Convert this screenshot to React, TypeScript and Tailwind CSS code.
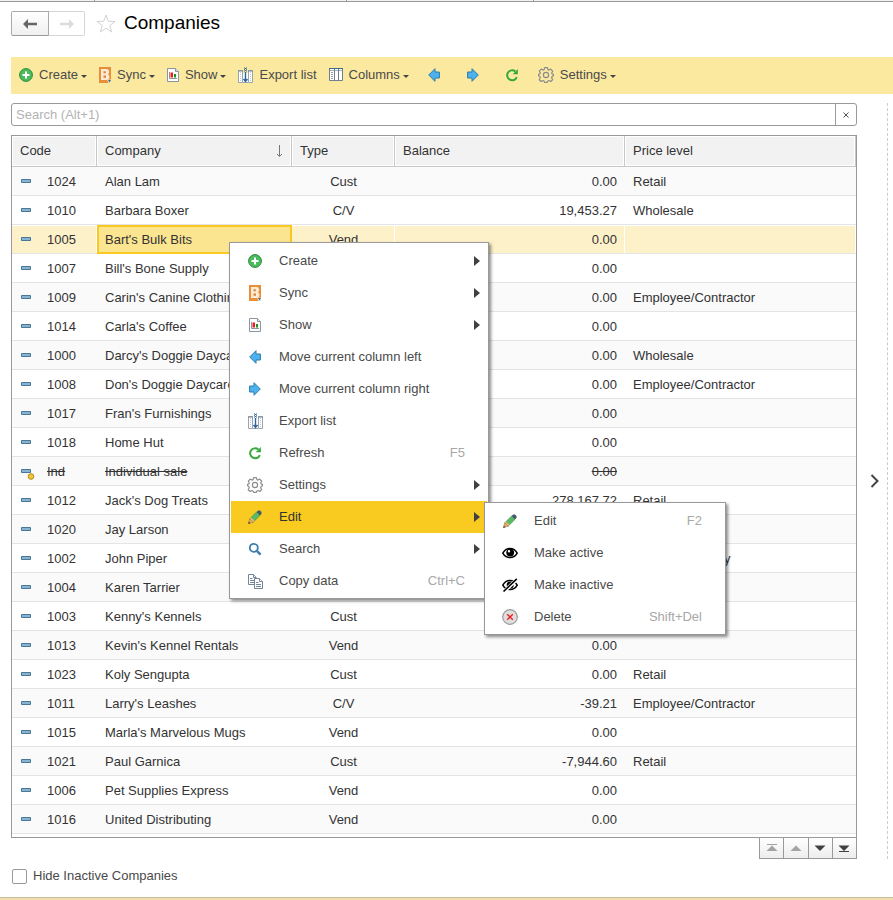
import type { ReactNode } from "react";

type Company = {
  code: string;
  name: string;
  type: string;
  balance: string;
  price: string;
  inactive?: boolean;
  selected?: boolean;
};

const companies: Company[] = [
  { code: "1024", name: "Alan Lam", type: "Cust", balance: "0.00", price: "Retail" },
  { code: "1010", name: "Barbara Boxer", type: "C/V", balance: "19,453.27", price: "Wholesale" },
  { code: "1005", name: "Bart's Bulk Bits", type: "Vend", balance: "0.00", price: "", selected: true },
  { code: "1007", name: "Bill's Bone Supply", type: "Vend", balance: "0.00", price: "" },
  { code: "1009", name: "Carin's Canine Clothing", type: "C/V", balance: "0.00", price: "Employee/Contractor" },
  { code: "1014", name: "Carla's Coffee", type: "Vend", balance: "0.00", price: "" },
  { code: "1000", name: "Darcy's Doggie Daycare", type: "Cust", balance: "0.00", price: "Wholesale" },
  { code: "1008", name: "Don's Doggie Daycare", type: "C/V", balance: "0.00", price: "Employee/Contractor" },
  { code: "1017", name: "Fran's Furnishings", type: "Vend", balance: "0.00", price: "" },
  { code: "1018", name: "Home Hut", type: "Vend", balance: "0.00", price: "" },
  { code: "Ind", name: "Individual sale", type: "Cust", balance: "0.00", price: "", inactive: true },
  { code: "1012", name: "Jack's Dog Treats", type: "Cust", balance: "278,167.72", price: "Retail" },
  { code: "1020", name: "Jay Larson", type: "Cust", balance: "0.00", price: "Retail" },
  { code: "1002", name: "John Piper", type: "Cust", balance: "0.00", price: "Friends & Family" },
  { code: "1004", name: "Karen Tarrier", type: "Cust", balance: "0.00", price: "Retail" },
  { code: "1003", name: "Kenny's Kennels", type: "Cust", balance: "0.00", price: "Retail" },
  { code: "1013", name: "Kevin's Kennel Rentals", type: "Vend", balance: "0.00", price: "" },
  { code: "1023", name: "Koly Sengupta", type: "Cust", balance: "0.00", price: "Retail" },
  { code: "1011", name: "Larry's Leashes", type: "C/V", balance: "-39.21", price: "Employee/Contractor" },
  { code: "1015", name: "Marla's Marvelous Mugs", type: "Vend", balance: "0.00", price: "" },
  { code: "1021", name: "Paul Garnica", type: "Cust", balance: "-7,944.60", price: "Retail" },
  { code: "1006", name: "Pet Supplies Express", type: "Vend", balance: "0.00", price: "" },
  { code: "1016", name: "United Distributing", type: "Vend", balance: "0.00", price: "" },
];

function CreateIcon() {
  return (
    <svg width="14" height="14" viewBox="0 0 14 14" aria-hidden="true">
      <circle cx="7" cy="7" r="6.4" fill="#4cbb5c" stroke="#2b8a3a" />
      <path d="M7 3.5v7M3.5 7h7" stroke="#fff" strokeWidth="2" />
    </svg>
  );
}

function SyncIcon() {
  return (
    <svg width="12" height="16" viewBox="0 0 12 16" aria-hidden="true">
      <path d="M0 0h12v16H0z" fill="#e98f3a" />
      <path
        d="M2 2h5.500c3 0 3.300 4 1.300 5.300 2.600 1.200 2.200 5.700-1.300 5.700H2z"
        fill="#fdebd6"
      />
      <path d="M4.500 4.200h2.300v2.100H4.500zM4.500 8.500h2.500v2.300H4.500z" fill="#dd8238" />
      <path d="M8 12.500h4V16H9.500z" fill="#f7e3c6" />
      <path d="M9 13h3l-1.500 2.400z" fill="#3d6d90" />
    </svg>
  );
}

function ShowIcon() {
  return (
    <svg width="12" height="14" viewBox="0 0 12 14" aria-hidden="true">
      <path d="M.5.5h8l3 3v10H.5z" fill="#fff" stroke="#8a95a0" />
      <path d="M8.500.5v3h3" fill="#dfe4e8" stroke="#8a95a0" />
      <path d="M2.500 4v6.500H10" stroke="#8a95a0" fill="none" />
      <path d="M3.500 4.500H6v5H3.500z" fill="#ef1c1c" />
      <path d="M7 6h2v3.500H7z" fill="#12961e" />
    </svg>
  );
}

function ExportIcon() {
  return (
    <svg width="15" height="16" viewBox="0 0 15 16" aria-hidden="true">
      <path d="M.5 3.500h4v12h-4zM10.500 3.500h4v12h-4z" fill="#fff" stroke="#98a4ae" />
      <path d="M5 6h5v9.500H5z" fill="#fff" />
      <path d="M0 4h5M10 4h5" stroke="#71869a" />
      <path d="M2.500 5v10M12.500 5v10" stroke="#c3cbd2" strokeDasharray="1 1" />
      <path d="M5 15.500h5" stroke="#98a4ae" />
      <path d="M7.500 5v9M5.500 12l2 2.500 2-2.500" stroke="#2c659c" strokeWidth="1.400" fill="none" />
      <path d="M6 .5l3 2M9 .5l-3 2M6 2.500l3 2M9 2.500l-3 2" stroke="#2c659c" strokeWidth=".8" />
    </svg>
  );
}

function ColumnsIcon() {
  return (
    <svg width="14" height="13" viewBox="0 0 14 13" aria-hidden="true">
      <path d="M.5.5h13v12H.5z" fill="#fff" stroke="#6e818f" />
      <path d="M0 .5h14" stroke="#3f6a80" />
      <path d="M1 2.500h12" stroke="#a9b6be" />
      <path d="M5.500 1v12M9.500 1v12" stroke="#6e818f" />
      <path d="M2 4.500h2M2 6.500h2M2 8.500h2M2 10.500h2" stroke="#8fa0ac" />
    </svg>
  );
}

function LeftIcon() {
  return (
    <svg width="12" height="14" viewBox="0 0 12 14" aria-hidden="true">
      <path d="M.7 7L7 .7V4h4.400v6H7v3.300z" fill="#4bb2ef" stroke="#2d7ba8" strokeLinejoin="round" />
    </svg>
  );
}

function RightIcon() {
  return (
    <svg width="12" height="14" viewBox="0 0 12 14" aria-hidden="true">
      <path d="M11.300 7L5 .7V4H.6v6H5v3.300z" fill="#4bb2ef" stroke="#2d7ba8" strokeLinejoin="round" />
    </svg>
  );
}

function RefreshIcon() {
  return (
    <svg width="14" height="14" viewBox="0 0 14 14" aria-hidden="true">
      <path d="M11.800 9.200A5 5 0 1 1 10.300 3.400" fill="none" stroke="#35a83a" strokeWidth="2" />
      <path d="M12.900 1v5.200H7.700z" fill="#35a83a" />
    </svg>
  );
}

function GearIcon() {
  return (
    <svg
      width="16"
      height="16"
      viewBox="0 0 16 16"
      fill="none"
      stroke="#8c8c8c"
      strokeWidth="1.200"
      strokeLinejoin="round"
      aria-hidden="true"
    >
      <path d="M6.600.7h2.800l.5 1.900 1.100.5 1.700-1 2 2-1 1.700.4 1.100 1.300.4v1.400l-1.300.9-.5 1.200 1.100 1.900-1.800 1.800-1.800-1-1.200.5-.5 1.300H6.600l-.6-1.300-1.100-.5-1.800 1-1.900-1.800 1.100-1.900-.5-1.200-1.200-.9V7.300l1.200-.4.5-1.200-1-1.600 1.900-2 1.700 1 1.200-.5z" />
      <circle cx="8" cy="8" r="2.600" />
    </svg>
  );
}

function PencilIcon() {
  return (
    <svg width="14" height="14" viewBox="0 0 14 14" aria-hidden="true">
      <path d="M.5 13.500l1.300-4.700 3.400 3.400z" fill="#eeb067" stroke="#8a6a3c" strokeWidth=".6" />
      <path d="M1.800 8.800l6.800-6.800 3.400 3.400-6.800 6.800z" fill="#58bb66" stroke="#3d7b49" strokeWidth=".5" />
      <path d="M1.800 8.800l1.400-1.400 3.400 3.400-1.400 1.400z" fill="#eeb067" />
      <path d="M8.600 2L10.200.5h1.700l1.600 1.600v1.700L12 5.400z" fill="#44576b" />
      <path d="M.3 13.700l.5-2 1.500 1.500z" fill="#333" />
    </svg>
  );
}

function SearchIcon() {
  return (
    <svg width="14" height="14" viewBox="0 0 14 14" fill="none" stroke="#3c7dae" aria-hidden="true">
      <circle cx="5.800" cy="5.800" r="4" strokeWidth="1.800" />
      <path d="M8.800 8.800l3.800 3.800" strokeWidth="2.400" />
    </svg>
  );
}

function CopyIcon() {
  return (
    <svg width="15" height="15" viewBox="0 0 15 15" fill="#fff" stroke="#75869a" aria-hidden="true">
      <path d="M.5.5h5l2.500 2.500v7.500H.5z" />
      <path d="M5.500.5v3H8M2 4.500h2.500M2 6.500h4M2 8.500h4" />
      <path d="M6.500 4.500h5l3 3v7h-8z" />
      <path d="M11.500 4.500v3h3M8 8.500h2.500M8 10.500h5M8 12.500h5" />
    </svg>
  );
}

function EyeIcon() {
  return (
    <svg width="16" height="12" viewBox="0 0 16 12" aria-hidden="true">
      <path d="M.8 6.200C4-.2 12-.2 15.200 6.200 12 12 4 12 .8 6.200z" fill="#fff" stroke="#000" strokeWidth="1.500" />
      <circle cx="8.200" cy="5.600" r="3.900" fill="#000" />
      <circle cx="7" cy="4.300" r="1.200" fill="#fff" />
    </svg>
  );
}

function EyeOffIcon() {
  return (
    <svg width="16" height="14" viewBox="0 0 16 14" aria-hidden="true">
      <path d="M.8 7.200C4 .8 12 .8 15.200 7.200 12 13 4 13 .8 7.200z" fill="#fff" stroke="#000" strokeWidth="1.500" />
      <circle cx="8.200" cy="7" r="3.500" fill="#000" />
      <path d="M6 8.500l4.500-4" stroke="#fff" strokeWidth="1.200" />
      <path d="M1.500 14L15.500.8" stroke="#fff" strokeWidth="3.600" />
      <path d="M1.500 13.500L14.800.8" stroke="#000" strokeWidth="1.600" />
    </svg>
  );
}

function DeleteIcon() {
  return (
    <svg width="16" height="16" viewBox="0 0 16 16" aria-hidden="true">
      <circle cx="8" cy="8" r="7.300" fill="#dedede" stroke="#9b9b9b" strokeWidth="1.200" />
      <path d="M5.200 5.200l5.600 5.600M10.800 5.200l-5.600 5.600" stroke="#ed2024" strokeWidth="1.400" />
    </svg>
  );
}

function RowIcon({ inactive }: { inactive?: boolean }) {
  return (
    <svg width="16" height="16" viewBox="0 0 16 16" className="shrink-0" aria-hidden="true">
      <path d="M1.500 5.500h9v3h-9z" fill="#87b4d4" stroke="#4a7793" />
      {inactive && <circle cx="11" cy="12.500" r="2.800" fill="#f3c433" stroke="#b58a1c" />}
    </svg>
  );
}

function Caret() {
  return (
    <svg width="6" height="3" viewBox="0 0 6 3" className="mt-1 ml-[3px]" aria-hidden="true">
      <path d="M0 0h6L3 3z" fill="#444" />
    </svg>
  );
}

function ToolButton({ icon, label, menu }: { icon: ReactNode; label: string; menu?: boolean }) {
  return (
    <button type="button" className="flex h-8 items-center gap-1.5 px-1.5">
      {icon}
      <span className="flex items-center whitespace-nowrap">
        {label}
        {menu && <Caret />}
      </span>
    </button>
  );
}

function IconButton({ icon, label }: { icon: ReactNode; label: string }) {
  return (
    <button type="button" aria-label={label} className="flex h-8 w-[39px] items-center justify-center">
      {icon}
    </button>
  );
}

function MenuItem({
  icon,
  label,
  shortcut,
  submenu,
  active,
}: {
  icon: ReactNode;
  label: string;
  shortcut?: string;
  submenu?: boolean;
  active?: boolean;
}) {
  return (
    <button
      type="button"
      role="menuitem"
      className={`flex h-8 w-full items-center pr-[7px] pl-4 text-left ${active ? "bg-[#f9cb20] text-[#333]" : ""}`}
    >
      <span className="flex w-4 shrink-0 justify-center">{icon}</span>
      <span className="ml-4 flex-1 whitespace-nowrap">{label}</span>
      {shortcut && <span className="mr-[15px] text-[#a8a8a8]">{shortcut}</span>}
      {submenu && (
        <svg width="6" height="10" viewBox="0 0 6 10" aria-hidden="true">
          <path d="M0 0l6 5-6 5z" fill="#404040" />
        </svg>
      )}
    </button>
  );
}

const menuFrame =
  "absolute border border-[#999] bg-white px-px pt-0.5 pb-px shadow-[2px_2px_3px_rgba(0,0,0,0.45)]";

function ContextMenu() {
  return (
    <div role="menu" className={`${menuFrame} top-[107px] left-[218px] w-[260px]`}>
      <MenuItem icon={<CreateIcon />} label="Create" submenu />
      <MenuItem icon={<SyncIcon />} label="Sync" submenu />
      <MenuItem icon={<ShowIcon />} label="Show" submenu />
      <MenuItem icon={<LeftIcon />} label="Move current column left" />
      <MenuItem icon={<RightIcon />} label="Move current column right" />
      <MenuItem icon={<ExportIcon />} label="Export list" />
      <MenuItem icon={<RefreshIcon />} label="Refresh" shortcut="F5" />
      <MenuItem icon={<GearIcon />} label="Settings" submenu />
      <MenuItem icon={<PencilIcon />} label="Edit" submenu active />
      <MenuItem icon={<SearchIcon />} label="Search" submenu />
      <MenuItem icon={<CopyIcon />} label="Copy data" shortcut="Ctrl+C" />
      <div role="menu" className={`${menuFrame} top-[259px] left-[254px] w-[242px]`}>
        <MenuItem icon={<PencilIcon />} label="Edit" shortcut="F2" />
        <MenuItem icon={<EyeIcon />} label="Make active" />
        <MenuItem icon={<EyeOffIcon />} label="Make inactive" />
        <MenuItem icon={<DeleteIcon />} label="Delete" shortcut="Shift+Del" />
      </div>
    </div>
  );
}

const headCell =
  "h-[31px] border-r border-b border-[#c8c8c8] bg-[#f2f2f2] px-2 text-left font-normal shadow-[inset_0_0_0_1px_#fff]";

function CompanyRow({ company, striped }: { company: Company; striped: boolean }) {
  const { selected, inactive } = company;
  const cell = `h-[29px] border-b border-b-[#e4e4e4] px-2 pt-0.5 whitespace-nowrap overflow-hidden ${
    selected ? "shadow-[inset_-1px_1px_0_#fff]" : ""
  } ${inactive ? "line-through" : ""}`;
  return (
    <tr className={selected ? "bg-[#fdf1c9]" : striped ? "bg-[#fafafa]" : "bg-white"}>
      <td className={cell}>
        <div className="flex items-center gap-[11px]">
          <RowIcon inactive={inactive} />
          <span className={inactive ? "line-through" : ""}>{company.code}</span>
        </div>
      </td>
      {selected ? (
        <td className="h-[29px] border-2 border-[#f9c922] bg-[#fbe591] px-1.5 whitespace-nowrap">{company.name}</td>
      ) : (
        <td className={cell}>{company.name}</td>
      )}
      <td className={`${cell} text-center`}>{company.type}</td>
      <td className={`${cell} text-right`}>{company.balance}</td>
      <td className={cell}>{company.price}</td>
    </tr>
  );
}

function CompanyTable() {
  return (
    <div className="border border-[#999] bg-white pb-[3px]">
      <table className="w-full table-fixed border-separate border-spacing-0 text-[#333]">
        <colgroup>
          <col className="w-[85px]" />
          <col className="w-[195px]" />
          <col className="w-[103px]" />
          <col className="w-[230px]" />
          <col />
        </colgroup>
        <thead>
          <tr>
            <th className={headCell}>Code</th>
            <th className={headCell}>
              <div className="flex items-center justify-between">
                Company
                <svg
                  width="7"
                  height="12"
                  viewBox="0 0 7 12"
                  fill="none"
                  stroke="#777"
                  role="img"
                  aria-label="Sorted"
                >
                  <path d="M3.500 0v11M1 9l2.500 2.500L6 9" />
                </svg>
              </div>
            </th>
            <th className={headCell}>Type</th>
            <th className={headCell}>Balance</th>
            <th className={headCell}>Price level</th>
          </tr>
        </thead>
        <tbody>
          {companies.map((company, i) => (
            <CompanyRow key={company.code} company={company} striped={i % 2 === 0} />
          ))}
        </tbody>
      </table>
    </div>
  );
}

function PagerButton({ label, disabled, children }: { label: string; disabled?: boolean; children: ReactNode }) {
  return (
    <button
      type="button"
      aria-label={label}
      disabled={disabled}
      className={`flex h-[21px] flex-1 items-center justify-center border-r border-b border-[#999] bg-linear-to-b from-white to-[#ededed] ${
        disabled ? "text-[#a3a3a3]" : "text-[#404040]"
      }`}
    >
      <svg width="12" height="8" viewBox="0 0 12 8" fill="currentColor" aria-hidden="true">
        {children}
      </svg>
    </button>
  );
}

export default function App() {
  return (
    <div className="flex min-h-screen flex-col bg-white font-['Liberation_Sans',Arial,sans-serif] text-[13px] leading-4 text-[#4a4a4a]">
      <div className="flex h-0.5 border-b border-[#999] bg-[#f2f2f2]">
        <span className="w-[95px] border-r border-[#999]" />
        <span className="w-[252px] border-r border-[#999]" />
        <span className="w-[187px] border-r border-[#999]" />
      </div>

      <header className="flex h-[55px] items-start pt-[9px] pl-[11px]">
        <div className="flex">
          <button
            type="button"
            aria-label="Back"
            className="flex h-[25px] w-[38px] items-center justify-center rounded-l-xs border border-[#aaa] border-b-[#999] bg-linear-to-b from-white to-[#f0f0f0]"
          >
            <svg width="14" height="10" viewBox="0 0 14 10" aria-hidden="true">
              <path d="M0 5l5-5v3.700h9v2.600H5V10z" fill="#666" />
            </svg>
          </button>
          <button
            type="button"
            aria-label="Forward"
            disabled
            className="flex h-[25px] w-9 items-center justify-center rounded-r-xs border border-l-0 border-[#d6d6d6] bg-white"
          >
            <svg width="14" height="10" viewBox="0 0 14 10" aria-hidden="true">
              <path d="M14 5L9 0v3.700H0v2.600h9V10z" fill="#dcdcdc" />
            </svg>
          </button>
        </div>
        <button type="button" aria-label="Add to favorites" className="mt-[3px] ml-[11px]">
          <svg width="20" height="19" viewBox="0 0 20 19" fill="none" stroke="#d2d2d2" aria-hidden="true">
            <path d="M10 1l2.300 6.300 6.800.2-5.400 4.100 2 6.400-5.700-3.800L4.300 18l2-6.400L.9 7.500l6.800-.2z" />
          </svg>
        </button>
        <h1 className="ml-2 text-[19px] leading-6 text-black">Companies</h1>
      </header>

      <div
        role="toolbar"
        aria-label="List commands"
        className="ml-[11px] flex h-[37px] items-center bg-[#fce9a0] pb-0.5 pl-0.5"
      >
        <ToolButton icon={<CreateIcon />} label="Create" menu />
        <ToolButton icon={<SyncIcon />} label="Sync" menu />
        <ToolButton icon={<ShowIcon />} label="Show" menu />
        <ToolButton icon={<ExportIcon />} label="Export list" />
        <ToolButton icon={<ColumnsIcon />} label="Columns" menu />
        <IconButton icon={<LeftIcon />} label="Move current column left" />
        <IconButton icon={<RightIcon />} label="Move current column right" />
        <IconButton icon={<RefreshIcon />} label="Refresh" />
        <ToolButton icon={<GearIcon />} label="Settings" menu />
      </div>

      <div className="mt-[9px] flex pl-[11px]">
        <main className="min-w-0 flex-1">
          <div className="flex h-[23px] rounded-[3px] border border-[#999] bg-white">
            <input
              type="text"
              aria-label="Search"
              placeholder="Search (Alt+1)"
              className="min-w-0 flex-1 px-1 outline-none placeholder:text-[#b3b3b3]"
            />
            <button
              type="button"
              aria-label="Clear search"
              className="flex w-[21px] items-center justify-center border-l border-[#999]"
            >
              <svg width="6" height="6" viewBox="0 0 6 6" stroke="#555" aria-hidden="true">
                <path d="M.5.5l5 5M5.500.5l-5 5" />
              </svg>
            </button>
          </div>

          <div className="relative mt-[9px]">
            <CompanyTable />
            <ContextMenu />
          </div>

          <div className="ml-auto flex w-[98px] border-l border-[#999]">
            <PagerButton label="First" disabled>
              <path d="M1 0h10v1H1zM6 1.500L11.500 7H.5z" />
            </PagerButton>
            <PagerButton label="Previous" disabled>
              <path d="M6 1.500L11.500 7H.5z" />
            </PagerButton>
            <PagerButton label="Next">
              <path d="M6 7L11.500 1.500H.5z" />
            </PagerButton>
            <PagerButton label="Last">
              <path d="M6 7L11.500 1.500H.5zM1 7h10v1H1z" />
            </PagerButton>
          </div>
        </main>

        <aside className="flex w-[31px] items-center justify-center border-r border-dashed border-[#ccc]">
          <button type="button" aria-label="Expand panel" className="pl-1.5">
            <svg width="10" height="14" viewBox="0 0 10 14" fill="none" stroke="#444" strokeWidth="2" aria-hidden="true">
              <path d="M1.500 1l6 6-6 6" />
            </svg>
          </button>
        </aside>
        <div className="w-[5px]" />
      </div>

      <label className="mt-[9px] mb-3 ml-3 flex items-center gap-1.5 self-start">
        <input type="checkbox" className="size-[15px] appearance-none rounded-xs border border-[#999] bg-white" />
        Hide Inactive Companies
      </label>

      <div className="mt-auto h-[3px] border-t border-[#c9bd9c] bg-[#f0dfae]" />
    </div>
  );
}
